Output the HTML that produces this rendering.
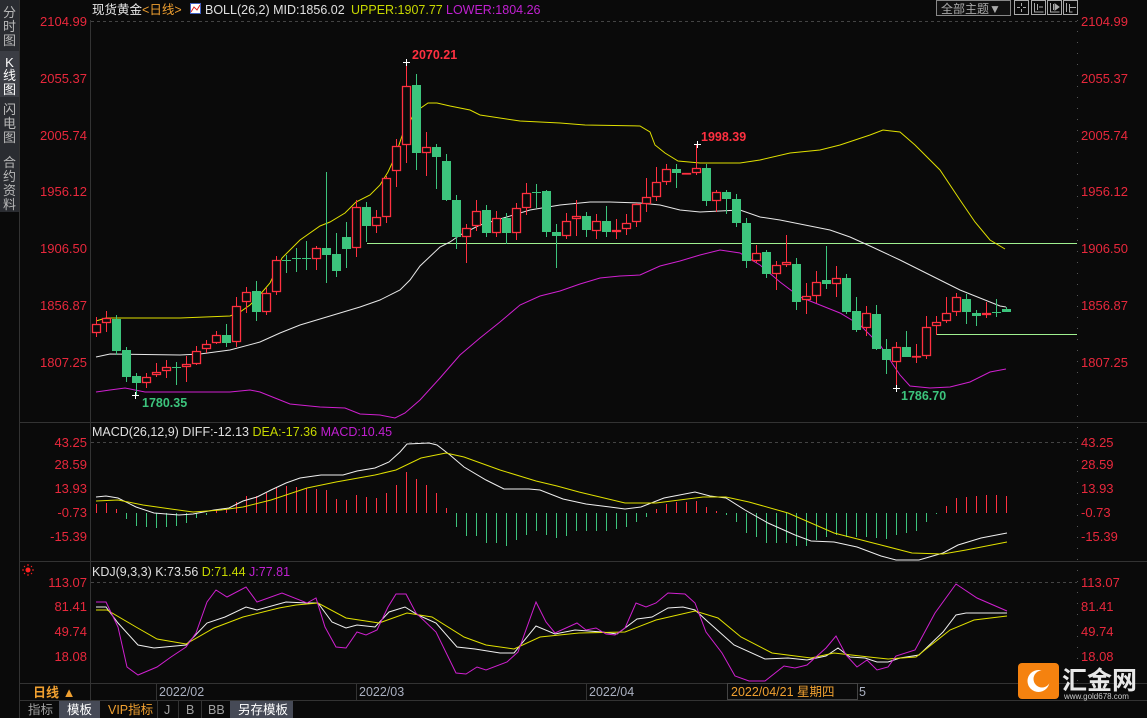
<!DOCTYPE html>
<html><head><meta charset="utf-8"><style>
html,body{margin:0;padding:0;background:#0a0a0a;width:1147px;height:718px;overflow:hidden;font-family:"Liberation Sans","Noto Sans CJK SC",sans-serif}
svg{position:absolute;left:0;top:0}
</style></head><body>
<svg id="s" width="1147" height="718" xmlns="http://www.w3.org/2000/svg" font-family="Liberation Sans, Noto Sans CJK SC, sans-serif">
<rect width="1147" height="718" fill="#0a0a0a"/>
<!-- sidebar -->
<rect x="0" y="0" width="19" height="212" fill="#2a2c31"/>
<rect x="0" y="51" width="19" height="46" fill="#3b3d44"/>
<g fill="#b8b8b8" font-size="13" text-anchor="middle">
<text x="9.5" y="17">分</text><text x="9.5" y="31">时</text><text x="9.5" y="45">图</text>
<text x="9.5" y="67" fill="#fff">K</text><text x="9.5" y="80" fill="#fff">线</text><text x="9.5" y="94" fill="#fff">图</text>
<text x="9.5" y="114">闪</text><text x="9.5" y="128">电</text><text x="9.5" y="142">图</text>
<text x="9.5" y="167">合</text><text x="9.5" y="181">约</text><text x="9.5" y="195">资</text><text x="9.5" y="209">料</text>
</g>
<line x1="19.5" y1="0" x2="19.5" y2="718" stroke="#333"/>
<!-- axes frame -->
<g stroke="#333" stroke-width="1">
<line x1="90.5" y1="20" x2="90.5" y2="700"/>
<line x1="20" y1="422.5" x2="1147" y2="422.5"/>
<line x1="20" y1="561.5" x2="1147" y2="561.5"/>
<line x1="20" y1="683.5" x2="1147" y2="683.5"/>
<line x1="20" y1="700.5" x2="1147" y2="700.5"/>
</g>
<g stroke="#444" stroke-dasharray="3,3">
<line x1="91" y1="21.5" x2="1077" y2="21.5"/>
<line x1="91" y1="442.5" x2="1077" y2="442.5"/>
<line x1="91" y1="582.5" x2="1077" y2="582.5"/>
</g>
<line x1="1077.5" y1="20" x2="1077.5" y2="683" stroke="#555" stroke-dasharray="1,10"/>
<g id="g"></g>
<!-- axis labels -->
<g fill="#e8283c" font-size="13">
<g text-anchor="end">
<text x="87" y="26">2104.99</text><text x="87" y="83">2055.37</text><text x="87" y="140">2005.74</text><text x="87" y="196">1956.12</text><text x="87" y="253">1906.50</text><text x="87" y="310">1856.87</text><text x="87" y="367">1807.25</text>
<text x="87" y="447">43.25</text><text x="87" y="469">28.59</text><text x="87" y="493">13.93</text><text x="87" y="517">-0.73</text><text x="87" y="541">-15.39</text>
<text x="87" y="587">113.07</text><text x="87" y="611">81.41</text><text x="87" y="636">49.74</text><text x="87" y="661">18.08</text>
</g>
<text x="1081" y="26">2104.99</text><text x="1081" y="83">2055.37</text><text x="1081" y="140">2005.74</text><text x="1081" y="196">1956.12</text><text x="1081" y="253">1906.50</text><text x="1081" y="310">1856.87</text><text x="1081" y="367">1807.25</text>
<text x="1081" y="447">43.25</text><text x="1081" y="469">28.59</text><text x="1081" y="493">13.93</text><text x="1081" y="517">-0.73</text><text x="1081" y="541">-15.39</text>
<text x="1081" y="587">113.07</text><text x="1081" y="611">81.41</text><text x="1081" y="636">49.74</text><text x="1081" y="661">18.08</text>
</g>
<!-- header -->
<g font-size="12.5">
<text x="92" y="14" fill="#e8e8e8">现货黄金<tspan fill="#f0a030">&lt;日线&gt;</tspan></text>
<rect x="190.5" y="3.5" width="10" height="10" fill="#fff" stroke="#4060c0"/>
<polyline points="191,12 194,7 197,10 200,5" fill="none" stroke="#e02020"/>
<text x="205" y="14" fill="#e0e0e0">BOLL(26,2) MID:1856.02</text>
<text x="351" y="14" fill="#c8d800">UPPER:1907.77</text>
<text x="446" y="14" fill="#c020d0">LOWER:1804.26</text>
<text x="92" y="436" fill="#e0e0e0">MACD(26,12,9) DIFF:-12.13 <tspan fill="#c8d800">DEA:-17.36</tspan> <tspan fill="#c020d0">MACD:10.45</tspan></text>
<text x="92" y="576" fill="#e0e0e0">KDJ(9,3,3) K:73.56 <tspan fill="#c8d800">D:71.44</tspan> <tspan fill="#c020d0">J:77.81</tspan></text>
</g>
<circle cx="28" cy="570" r="2.5" fill="#ff2020"/>
<g stroke="#ff2020" stroke-width="1"><line x1="22" y1="570" x2="24" y2="570"/><line x1="32" y1="570" x2="34" y2="570"/><line x1="28" y1="564" x2="28" y2="566"/><line x1="28" y1="574" x2="28" y2="576"/><line x1="24" y1="566" x2="25" y2="567"/><line x1="31" y1="573" x2="32" y2="574"/><line x1="32" y1="566" x2="31" y2="567"/><line x1="24" y1="574" x2="25" y2="573"/></g>
<!-- top right buttons -->
<rect x="936.5" y="0.5" width="74" height="15" fill="#111" stroke="#888"/>
<text x="941" y="13" fill="#aaa" font-size="12">全部主题▼</text>
<g fill="none" stroke="#aaa">
<rect x="1014.5" y="0.5" width="14" height="14"/><rect x="1031.5" y="0.5" width="14" height="14"/><rect x="1047.5" y="0.5" width="14" height="14"/><rect x="1063.5" y="0.5" width="14" height="14"/>
<path d="M1021.5 3v3M1021.5 9v3M1017 7.5h3M1023 7.5h3"/>
<path d="M1034.5 3v9h9M1037.5 4v6M1039 7h4"/>
<path d="M1050.5 3v9h9M1053.5 4v6"/><path d="M1055 4l4 3l-4 3z" fill="#aaa"/>
<path d="M1066.5 3v9M1069.5 4v8h3M1070 7.5h6"/>
</g>
<!-- chart annotations -->
<g font-size="12.5" font-weight="bold">
<text x="412" y="59" fill="#ff3040">2070.21</text>
<text x="701" y="141" fill="#ff3040">1998.39</text>
<text x="142" y="407" fill="#3cc47c">1780.35</text>
<text x="901" y="400" fill="#3cc47c">1786.70</text>
</g>
<!-- bottom date row -->
<rect x="20" y="684" width="70" height="16" fill="#0a0a0a"/>
<text x="33" y="697" fill="#f0a030" font-size="13" font-weight="bold">日线 ▲</text>
<g stroke="#333"><line x1="156.5" y1="684" x2="156.5" y2="700"/><line x1="356.5" y1="684" x2="356.5" y2="700"/><line x1="586.5" y1="684" x2="586.5" y2="700"/></g>
<g fill="#aab0c0" font-size="12.5"><text x="159" y="696">2022/02</text><text x="359" y="696">2022/03</text><text x="589" y="696">2022/04</text></g>
<rect x="727.5" y="683.5" width="130" height="16" fill="#0a0a0a" stroke="#444"/>
<text x="731" y="696" fill="#f0a030" font-size="12.5">2022/04/21 星期四</text>
<text x="859" y="696" fill="#aab0c0" font-size="12.5">5</text>
<!-- tabs -->
<rect x="20" y="701" width="1127" height="17" fill="#0a0a0a"/>
<rect x="59" y="701" width="41" height="17" fill="#464a56"/>
<rect x="230" y="701" width="63" height="17" fill="#464a56"/>
<g font-size="12.5">
<text x="28" y="714" fill="#a0a0a0">指标</text>
<text x="67" y="714" fill="#fff">模板</text>
<text x="108" y="714" fill="#f0a030">VIP指标</text>
<text x="164" y="714" fill="#a0a0a0">J</text>
<text x="186" y="714" fill="#a0a0a0">B</text>
<text x="208" y="714" fill="#a0a0a0">BB</text>
<text x="238" y="714" fill="#fff">另存模板</text>
</g>
<line x1="157.5" y1="701" x2="157.5" y2="718" stroke="#333"/><line x1="178.5" y1="701" x2="178.5" y2="718" stroke="#333"/><line x1="201.5" y1="701" x2="201.5" y2="718" stroke="#333"/>
<!-- logo -->
<rect x="1018" y="663" width="41" height="36" rx="4" fill="#f5820f"/>
<circle cx="1038.5" cy="681" r="11" fill="#fff"/>
<circle cx="1042" cy="679" r="8.5" fill="#f5820f"/>
<text x="1062" y="689" fill="#e8e8e8" font-size="25" font-weight="bold">汇金网</text>
<text x="1064" y="699" fill="#ccc" font-size="8">www.gold678.com</text>
</svg>
<script>
var C=[[333,324,317,337],[323,318,311,332],[319,351,315,355],[350,377,347,382],[376,383,373,395],[383,377,373,388],[375,372,363,377],[371,367,360,378],[367,367,362,385],[367,364,356,382],[364,351,346,365],[349,344,340,353],[343,335,331,344],[335,343,324,347],[342,306,297,347],[302,292,287,313],[291,312,281,321],[312,293,288,315],[292,260,256,295],[260,260.5,255,273],[258,258.5,248,272],[258,258.5,241,270],[259,248,246,270],[248,255,172,283],[254,271,233,277],[237,249,222,268],[248,207,200,257],[207,226,202,242],[226,217,210,233],[217,178,176,223],[171,146,139,187],[145,86,62,163],[85,153,74,170],[153,147,132,176],[147,157,144,189],[161,200,154,201],[200,237,195,249],[237,228,224,263],[226,211,200,231],[210,233,205,237],[233,218,211,237],[218,233,213,244],[233,208,203,240],[208,193,183,215],[192,192,184,208],[191,232,190,237],[232,236,224,268],[236,221,213,239],[219,216,200,236],[216,230,212,237],[231,221,214,239],[221,232,206,237],[232,230,219,239],[229,223,214,235],[222,204,203,227],[204,197,178,212],[197,182,167,201],[182,169,164,185],[169,173,164,188],[173,173,173,173],[173,168,144,175],[168,201,164,206],[201,192,190,212],[192,199,190,214],[199,223,194,227],[223,261,218,268],[261,253,245,263],[252,274,250,278],[274,265,261,290],[265,262,235,267],[264,302,258,310],[300,296,283,314],[296,282,271,303],[280,284,246,289],[284,278,266,297],[278,312,274,314],[311,330,297,332],[328,313,306,336],[314,349,305,350],[349,360,339,374],[362,347,342,388],[347,357,331,357],[357,356,344,363],[356,327,316,359],[326,322,316,335],[321,313,297,323],[312,297,293,316],[299,312,294,324],[313,316,310,326],[315,313,302,318],[312,312,299,317],[309,312,307,312]];
var H=[[504,0],[503,0],[509,0],[0,519],[0,526],[0,527],[0,528],[0,527],[0,526],[0,523],[0,518],[0,515],[510,0],[509,0],[502,0],[496,0],[496,0],[493,0],[487,0],[486,0],[487,0],[488,0],[489,0],[490,0],[499,0],[500,0],[495,0],[497,0],[498,0],[493,0],[485,0],[472,0],[479,0],[485,0],[493,0],[508,0],[0,527],[0,536],[0,536],[0,543],[0,543],[0,546],[0,540],[0,535],[0,531],[0,535],[0,538],[0,536],[0,531],[0,531],[0,531],[0,531],[0,529],[0,527],[0,522],[0,517],[509,0],[504,0],[502,0],[502,0],[501,0],[507,0],[511,0],[0,515],[0,522],[0,533],[0,537],[0,543],[0,543],[0,543],[0,546],[0,546],[0,540],[0,537],[0,535],[0,537],[0,537],[0,537],[0,538],[0,539],[0,535],[0,533],[0,531],[0,522],[0,514],[506,0],[498,0],[497,0],[496,0],[495,0],[495,0],[496,0]];
var L={
up:["#e0e000","96,321 106,318 120,318 180,318 230,316 240,312 250,305 258,297 270,283 282,258 300,240 320,226 330,222 345,213 356,202 370,195 380,185 388,172 395,157 402,136 408,125 415,112 428,103 437,103 450,106 470,110 480,115 520,121 540,122 560,123 585,125 640,126 650,132 655,145 665,153 678,161 700,163 740,163 760,160 790,153 820,150 840,145 855,140 870,135 883,130 900,132 915,145 940,170 960,200 975,222 990,240 1005,249"],
mid:["#e8e8e8","96,357 110,354 180,355 200,354 230,350 260,342 280,333 300,325 320,319 340,313 360,307 380,300 400,290 410,280 420,266 440,247 450,242 460,235 480,225 500,219 530,210 560,205 590,202 610,202 640,203 660,205 680,210 700,212 720,211 740,210 760,217 780,220 800,224 830,230 850,237 870,246 900,260 920,270 940,280 960,290 980,298 1000,306 1006,307"],
lo:["#d020d0","96,392 110,390 125,388 145,392 200,392 230,392 250,390 260,392 275,398 290,404 320,407 345,408 360,414 380,415 395,418 405,413 420,400 440,378 460,355 480,338 500,322 520,305 540,296 560,291 580,284 600,278 620,276 640,275 660,266 680,261 700,255 720,250 740,253 760,265 780,282 800,297 820,305 840,313 860,325 880,345 900,375 910,386 930,388 950,387 970,382 990,372 1006,369"],
dif:["#f0f0f0","96,497 106,496 118,498 136,507 154,513 179,515 193,514 214,510 229,508 243,501 257,497 271,490 286,483 300,478 321,475 343,475 357,471 375,468 389,462 400,452 407,444 429,443 437,445 450,455 464,467 486,480 504,489 529,489 540,490 563,499 586,504 610,507 625,509 641,507 664,498 695,492 710,496 726,498 745,510 768,523 795,535 811,541 834,542 857,547 881,556 896,560 919,560 943,553 958,545 981,538 1007,533"],
dea:["#e0e000","96,501 118,500 143,505 171,509 193,512 221,510 243,507 271,500 307,488 336,482 375,475 396,470 421,458 446,453 464,457 500,470 536,481 557,486 579,492 625,503 656,503 703,497 726,497 749,502 788,513 834,533 881,545 912,553 943,554 966,550 1007,542"],
k:["#f0f0f0","96,607 106,607 118,623 138,645 154,648 186,645 207,623 225,617 246,607 257,610 286,602 307,603 318,603 332,622 346,628 357,625 375,627 389,612 405,607 418,615 436,623 457,647 475,649 500,653 514,653 536,626 555,634 575,630 602,632 617,634 637,619 652,617 668,608 683,607 695,610 706,620 734,645 765,659 788,658 807,660 826,656 838,648 850,657 865,658 877,662 888,662 900,658 919,655 943,632 956,615 966,613 1007,613"],
d:["#e0e000","96,610 107,610 136,627 157,639 186,644 214,628 243,617 279,608 296,605 318,603 346,618 379,623 407,613 432,617 464,637 486,645 514,649 540,637 579,633 625,632 656,620 695,611 718,618 741,637 772,653 811,658 834,653 869,657 888,659 916,657 950,630 974,620 1007,616"],
j:["#d020d0","96,602 106,602 118,627 127,667 138,675 157,667 171,657 186,647 196,633 207,602 216,590 227,597 246,587 257,602 282,593 307,603 316,598 325,627 336,647 346,648 357,632 366,635 377,630 388,607 396,594 406,594 416,613 436,632 456,673 466,674 477,667 486,670 507,662 518,652 536,602 546,622 555,633 577,623 586,630 596,628 606,634 615,635 625,628 636,603 646,607 656,603 668,593 685,594 695,603 706,632 722,653 735,676 749,681 765,681 784,666 795,668 807,665 826,648 836,636 846,655 857,667 867,660 877,670 888,667 896,656 915,650 935,613 956,584 977,598 1007,611"]};
var o='';
o+='<line x1="367" y1="243.5" x2="1077" y2="243.5" stroke="#a0f090"/>';
o+='<line x1="936" y1="334.5" x2="1077" y2="334.5" stroke="#a0f090"/>';
for(var i=0;i<H.length;i++){var x=96+i*10+.5,h=H[i];
 if(h[0])o+='<line x1="'+x+'" y1="'+h[0]+'" x2="'+x+'" y2="513" stroke="#ff3040"/>';
 else o+='<line x1="'+x+'" y1="513" x2="'+x+'" y2="'+h[1]+'" stroke="#3cc47c"/>';}
['up','mid','lo','dif','dea','k','d','j'].forEach(function(n){o+='<polyline points="'+L[n][1]+'" fill="none" stroke="'+L[n][0]+'" stroke-width="1"/>';});
for(var i=0;i<C.length;i++){var c=C[i],x=96+i*10,op=c[0],cl=c[1],red=cl<op||(i==59);
 var t=Math.min(op,cl),b=Math.max(op,cl);if(b-t<1)b=t+1;
 if(red){o+='<line x1="'+(x+.5)+'" y1="'+c[2]+'" x2="'+(x+.5)+'" y2="'+t+'" stroke="#ff3040"/><line x1="'+(x+.5)+'" y1="'+b+'" x2="'+(x+.5)+'" y2="'+c[3]+'" stroke="#ff3040"/>';
  o+='<rect x="'+(x-3.5)+'" y="'+(t+.5)+'" width="8" height="'+Math.max(b-t-1,0.5)+'" fill="#0a0a0a" stroke="#ff3040" stroke-width="1.3"/>';}
 else{o+='<line x1="'+(x+.5)+'" y1="'+c[2]+'" x2="'+(x+.5)+'" y2="'+c[3]+'" stroke="#3cc47c"/><rect x="'+(x-4)+'" y="'+t+'" width="9" height="'+(b-t)+'" fill="#3cc47c"/>';}}
o+='<path d="M403 62.5h7M406.5 59v7M132 395.5h7M135.5 392v7M694 144.5h7M697.5 141v7M893 388.5h7M896.5 385v7" stroke="#fff"/>';
document.getElementById('g').innerHTML=o;
</script>
</body></html>
